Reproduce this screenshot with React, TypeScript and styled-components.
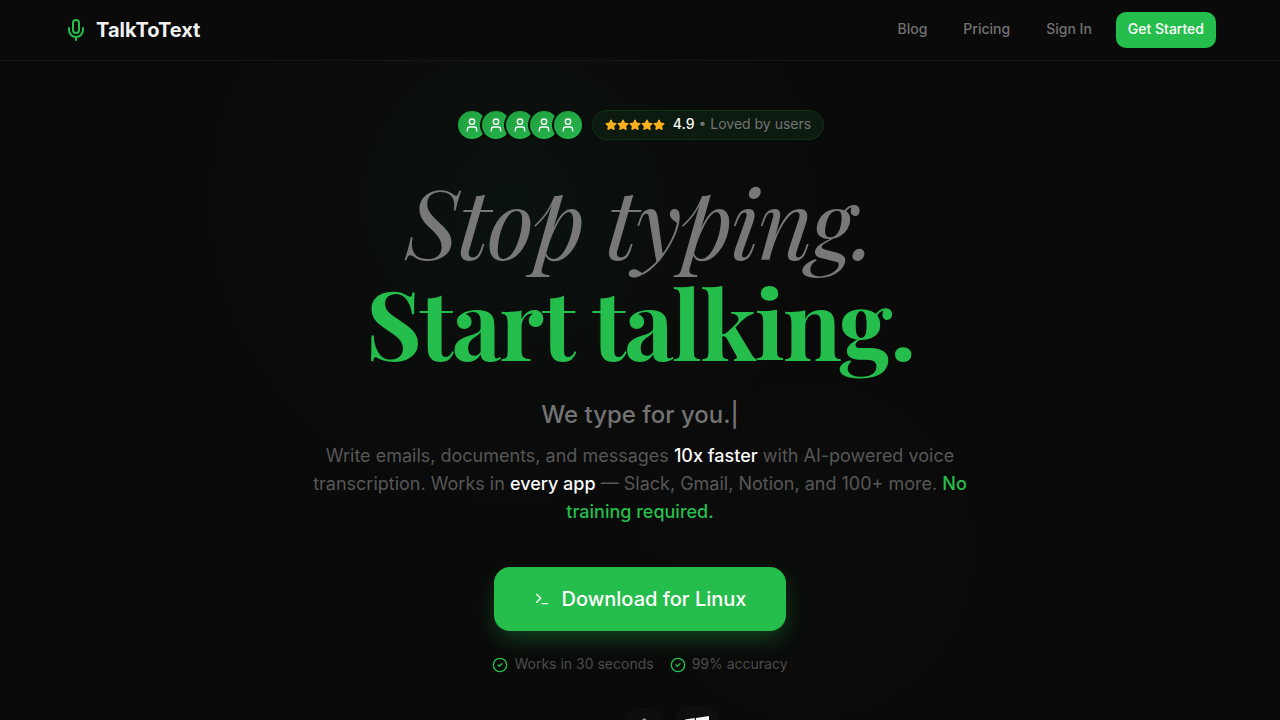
import React from "react";
import styled, { createGlobalStyle } from "styled-components";
import { Mic, User, Terminal, CircleCheck } from "lucide-react";

const GlobalStyle = createGlobalStyle`
  * { box-sizing: border-box; }
  body {
    margin: 0;
    background: #0a0a0a;
    color: #fafafa;
    font-family: Inter, "Liberation Sans", sans-serif;
    overflow-x: hidden;
  }
`;

const Page = styled.div`
  height: 100vh;
  overflow: hidden;
  background:
    radial-gradient(circle at 40% 200px, rgba(12, 60, 44, 0.17), rgba(14, 50, 24, 0.08) 170px, transparent 310px),
    radial-gradient(circle at 63% 550px, rgba(20, 60, 20, 0.06), transparent 180px),
    #0a0a0a;
`;

const Header = styled.header`
  display: flex;
  align-items: center;
  justify-content: space-between;
  height: 61px;
  padding: 0 64px;
  background: #0a0a0a;
  border-bottom: 1px solid #151515;
`;

const Brand = styled.a`
  display: flex;
  align-items: center;
  gap: 8px;
  color: #f0f0f0;
  font-size: 20px;
  font-weight: 700;
  line-height: 28px;
  text-decoration: none;
  svg { color: #25be4c; }
`;

const Nav = styled.nav`
  display: flex;
  align-items: center;
  gap: 12px;
`;

const NavLink = styled.a`
  padding: 7px 12px 9px;
  color: #737373;
  font-size: 14px;
  font-weight: 500;
  line-height: 20px;
  text-decoration: none;
`;

const StartButton = styled.button`
  height: 36px;
  padding: 0 12px 2px;
  border: 0;
  border-radius: 10px;
  background: #25be4c;
  color: #fff;
  font: 500 14px/20px Inter, sans-serif;
`;

const Hero = styled.main`
  display: flex;
  flex-direction: column;
  align-items: center;
  padding: 48px 24px 0;
  text-align: center;
`;

const Proof = styled.div`
  display: flex;
  align-items: center;
  gap: 8px;
`;

const Avatars = styled.div`
  display: flex;
`;

const Avatar = styled.span`
  display: flex;
  align-items: center;
  justify-content: center;
  width: 32px;
  height: 32px;
  border: 2px solid #0a0f0b;
  border-radius: 50%;
  background: linear-gradient(135deg, #1f9e40, #25b64a);
  color: #fff;
  & + & { margin-left: -8px; }
`;

const Rating = styled.div`
  display: flex;
  align-items: center;
  gap: 8px;
  height: 30px;
  padding: 0 12px;
  border: 1px solid #0f331a;
  border-radius: 15px;
  background: #0c1a10;
`;

const RatingText = styled.span`
  padding-bottom: 2px;
  color: #737373;
  font-size: 14px;
  line-height: 20px;
  strong { color: #fafafa; font-weight: 500; }
`;

const Stars = styled.span`
  display: flex;
`;

const Title = styled.h1`
  display: flex;
  flex-direction: column;
  margin: 29px 0 0;
  font-family: "Playfair Display", "Liberation Serif", serif;
  font-size: 96px;
  font-weight: 400;
  letter-spacing: -2px;
  line-height: 101px;
`;

const Muted = styled.em`
  color: #787878;
`;

const Bright = styled.strong`
  color: #25be4c;
  font-weight: 700;
`;

const Typed = styled.p`
  margin: 27px 0 0;
  color: #737373;
  font-size: 24px;
  font-weight: 500;
  line-height: 32px;
`;

const Lead = styled.p`
  max-width: 672px;
  margin: 11px 0 0;
  color: #575757;
  font-size: 18px;
  line-height: 28px;
  strong { color: #fafafa; font-weight: 500; }
  em { color: #25be4c; font-style: normal; font-weight: 500; }
`;

const Download = styled.button`
  display: flex;
  align-items: center;
  gap: 12px;
  height: 64px;
  margin-top: 41px;
  padding: 0 40px;
  border: 0;
  border-radius: 16px;
  background: #25be4c;
  box-shadow: 0 10px 24px -4px rgba(37, 190, 76, 0.35);
  color: #fff;
  font: 500 20px/28px Inter, sans-serif;
`;

const Facts = styled.ul`
  display: flex;
  gap: 16px;
  margin: 23px 0 0;
  padding: 0;
  list-style: none;
  color: #4c4c4c;
  font-size: 14px;
  line-height: 20px;
`;

const Fact = styled.li`
  display: flex;
  align-items: center;
  gap: 6px;
  svg { color: #25be4c; }
  span { padding-bottom: 2px; }
`;

const Platforms = styled.div`
  display: flex;
  align-items: center;
  gap: 12px;
  margin: 31px 0 0 64px;
`;

const Platform = styled.span<{ $size: number }>`
  display: flex;
  align-items: center;
  justify-content: center;
  width: ${(p) => p.$size}px;
  height: ${(p) => p.$size}px;
  border: 1px solid #111111;
  border-radius: 12px;
  background: #0e0e0e;
  color: #f5f5f5;
`;

const Star = () => (
  <svg width="12" height="12" viewBox="0 0 24 24" fill="#fbb01e" stroke="#fbb01e" strokeWidth="3" strokeLinejoin="round" aria-hidden="true">
    <path d="M12 2.500l2.900 6 6.600.9-4.800 4.600 1.200 6.500L12 17.400l-5.900 3.100 1.200-6.500L2.500 9.400l6.600-.9z" />
  </svg>
);

export default function App() {
  return (
    <Page>
      <GlobalStyle />
      <Header>
        <Brand href="#"><Mic size={24} />TalkToText</Brand>
        <Nav>
          <NavLink href="#blog">Blog</NavLink>
          <NavLink href="#pricing">Pricing</NavLink>
          <NavLink href="#signin">Sign In</NavLink>
          <StartButton>Get Started</StartButton>
        </Nav>
      </Header>
      <Hero>
        <Proof>
          <Avatars>
            {[0, 1, 2, 3, 4].map((i) => (
              <Avatar key={i}><User size={16} /></Avatar>
            ))}
          </Avatars>
          <Rating>
            <Stars>{[0, 1, 2, 3, 4].map((i) => <Star key={i} />)}</Stars>
            <RatingText><strong>4.9</strong> • Loved by users</RatingText>
          </Rating>
        </Proof>
        <Title><Muted>Stop typing.</Muted><Bright>Start talking.</Bright></Title>
        <Typed>We type for you.|</Typed>
        <Lead>
          Write emails, documents, and messages <strong>10x faster</strong> with AI-powered voice
          transcription. Works in <strong>every app</strong> — Slack, Gmail, Notion, and 100+ more.{" "}
          <em>No training required.</em>
        </Lead>
        <Download><Terminal size={16} />Download for Linux</Download>
        <Facts>
          <Fact><CircleCheck size={16} /><span>Works in 30 seconds</span></Fact>
          <Fact><CircleCheck size={16} /><span>99% accuracy</span></Fact>
        </Facts>
        <Platforms>
          <Platform $size={38}>
            <svg width="20" height="20" viewBox="0 0 24 24" fill="currentColor" aria-label="Linux">
              <path d="M10 .6c2.600-.6 4.200 1.200 4.200 4 0 3.400 4.400 6 4.400 11.400 0 4.600-2.600 7-6.600 7s-6.600-2.400-6.600-7C5.400 10.600 9 8 8.800 4.600 8.700 2.600 8.600 1 10 .6z" opacity="0.6" />
            </svg>
          </Platform>
          <Platform $size={42}>
            <svg width="24" height="24" viewBox="0 0 24 24" fill="currentColor" aria-label="Windows">
              <path d="M0 3.400L9.800 2.100v9.400H0zM10.900 1.900L24 0v11.400H10.900zM0 12.600h9.800V22L0 20.700zM10.900 12.600H24V24l-13.100-1.800z" />
            </svg>
          </Platform>
        </Platforms>
      </Hero>
    </Page>
  );
}
